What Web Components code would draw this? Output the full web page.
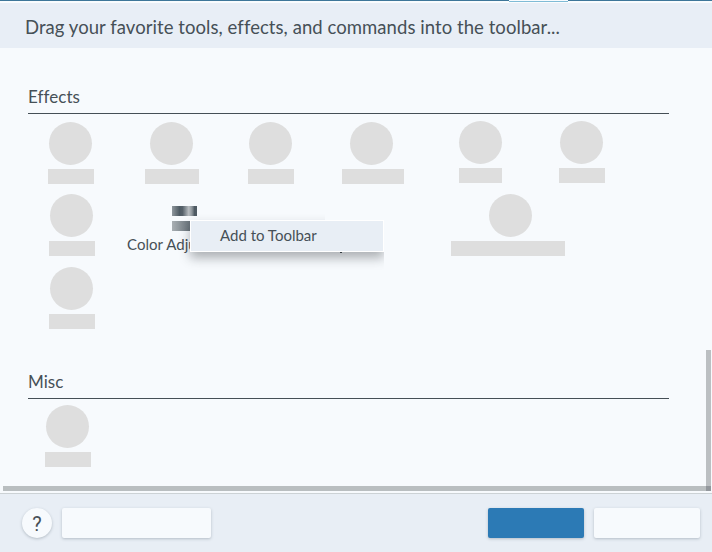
<!DOCTYPE html>
<html lang="en">
<head>
<meta charset="utf-8">
<title>Customize Toolbar</title>
<style>
html,body{margin:0;height:100%;overflow:hidden;background:#f7fafd}
body{font-family:Lato,"Liberation Sans",sans-serif;color:#465057}
</style>
</head>
<body>
<customize-panel></customize-panel>
<script>
const define = (name, html) => customElements.define(name, class extends HTMLElement {
  constructor() {
    super();
    const t = document.createElement('template');
    t.innerHTML = html;
    this.attachShadow({mode: 'open'}).append(t.content.cloneNode(true));
  }
});

define('panel-header', `<style>
:host{display:flex;flex-direction:column;flex:none;height:48px;background:#e8eef6;box-sizing:border-box}
.edge{display:flex;flex:none;height:3px;background:linear-gradient(#3d7699 0 1px,#f9fcfe 1px);justify-content:flex-end}
.tab{width:59px;height:2px;margin-right:144px;background:linear-gradient(#f7fbfe 0 1px,#7fbbd6 1px)}
.title{display:flex;align-items:center;flex:1;padding:2px 0 0 25px;font-size:18.5px;line-height:24px;letter-spacing:.06px;white-space:nowrap}
</style><div class="edge"><div class="tab"></div></div><div class="title"><span><slot></slot></span></div>`);

define('section-heading', `<style>
:host{display:flex;align-items:flex-end;box-sizing:border-box;width:641px;height:30px;margin-left:28px;padding-bottom:5px;border-bottom:1px solid #454f56;font-size:17px;line-height:22px;letter-spacing:.05px}
</style><span><slot></slot></span>`);

define('tool-placeholder', `<style>
:host{display:flex;flex:none;flex-direction:column;gap:4px;width:var(--w,46px);margin-left:var(--gap,0)}
.icon{width:43px;height:43px;border-radius:50%;background:#dedede;margin-left:var(--inset,1px)}
.label{height:15px;background:#dedede}
</style><div class="icon"></div><div class="label"></div>`);

define('color-tool', `<style>
:host{display:flex;flex:none;flex-direction:column;width:66px;margin-left:32px;padding-top:12px;font-size:15px;line-height:18px;letter-spacing:.05px;white-space:nowrap}
svg{margin-left:45px;display:block}
span{margin-top:4px}
</style><svg width="25" height="25" viewBox="0 0 25 25"><defs>
<linearGradient id="a"><stop offset="0" stop-color="#8f979d"/><stop offset=".3" stop-color="#4f5b64"/><stop offset=".42" stop-color="#56616a"/><stop offset=".67" stop-color="#b9bec2"/><stop offset=".8" stop-color="#8b9399"/><stop offset=".9" stop-color="#4e5a63"/><stop offset="1" stop-color="#4e5a63"/></linearGradient>
<linearGradient id="b"><stop offset="0" stop-color="#a9afb3"/><stop offset="1" stop-color="#4e5a63"/></linearGradient></defs>
<path fill="url(#a)" d="M0 0h25v10H0z"/><path fill="url(#b)" d="M0 15h25v10H0z"/></svg><span><slot></slot></span>`);

define('context-menu', `<style>
:host{position:absolute;left:190px;top:220px;width:194px;height:32px;box-sizing:border-box;display:flex;align-items:center;padding:0 0 2px 29px;border:1px solid #fff;background:#e8eef5;box-shadow:0 6px 11px rgba(40,45,50,.36);clip-path:polygon(-18px -8px,135px -8px,135px 0,100% 0,100% 54px,-18px 54px);font-size:15px;line-height:20px;letter-spacing:0}
i{position:absolute;left:149px;top:31px;width:2px;height:1px;background:#343c42}
</style><span><slot></slot></span><i></i>`);

define('push-button', `<style>
:host{display:flex;flex:none;align-items:center;justify-content:center;box-sizing:border-box;padding-top:2px;width:var(--w);height:30px;border-radius:var(--r,2px);background:var(--bg,#f7fafd);box-shadow:0 1px 3px rgba(60,75,90,.3);font:20px/28px Roboto,sans-serif}
</style><slot></slot>`);

define('panel-footer', `<style>
:host{display:flex;flex:none;align-items:center;box-sizing:border-box;height:59px;border-top:1px solid #ccd2d5;padding:0 12px 0 22px;gap:10px;background:#e8eef5}
.space{flex:1}
</style><push-button style="--w:30px;--r:50%">?</push-button><push-button style="--w:149px"></push-button><div class="space"></div><push-button style="--w:96px;--bg:#2c7ab5"></push-button><push-button style="--w:106px"></push-button>`);

define('customize-panel', `<style>
:host{display:flex;flex-direction:column;width:712px;height:552px;position:relative;overflow:hidden;background:#f7fafd}
.body{flex:1;min-height:0;display:grid;grid-template-columns:706px 5px;grid-template-rows:438px 5px}
.content{display:flex;flex-direction:column;padding-top:36px}
.row{display:flex;align-items:flex-start;flex:none}
.v{background:#bbbfc2;margin-top:302px}
.h{background:#b9bec0;margin-left:3px}
.c{background:#92979c}
.up{margin-top:-1px}
</style>
<panel-header>Drag your favorite tools, effects, and commands into the toolbar...</panel-header>
<div class="body"><div class="content">
<section-heading>Effects</section-heading>
<div class="row" style="padding:8px 0 0 48px;height:72px;box-sizing:border-box">
<tool-placeholder></tool-placeholder>
<tool-placeholder style="--w:54px;--gap:51px;--inset:5px"></tool-placeholder>
<tool-placeholder style="--gap:49px"></tool-placeholder>
<tool-placeholder style="--w:62px;--gap:48px;--inset:8px"></tool-placeholder>
<tool-placeholder class="up" style="--w:43px;--gap:55px;--inset:0px"></tool-placeholder>
<tool-placeholder class="up" style="--gap:57px"></tool-placeholder></div>
<div class="row" style="padding:8px 0 0 49px;height:73px;box-sizing:border-box">
<tool-placeholder></tool-placeholder><color-tool>Color Adju</color-tool>
<tool-placeholder style="--w:114px;--gap:258px;--inset:38px"></tool-placeholder></div>
<div class="row" style="padding:8px 0 0 49px;height:110px;box-sizing:border-box"><tool-placeholder></tool-placeholder></div>
<section-heading>Misc</section-heading>
<div class="row" style="padding:6px 0 0 45px"><tool-placeholder></tool-placeholder></div>
</div><div class="v"></div><div class="h"></div><div class="c"></div></div>
<panel-footer></panel-footer>
<context-menu>Add to Toolbar</context-menu>`);
</script>
</body>
</html>
